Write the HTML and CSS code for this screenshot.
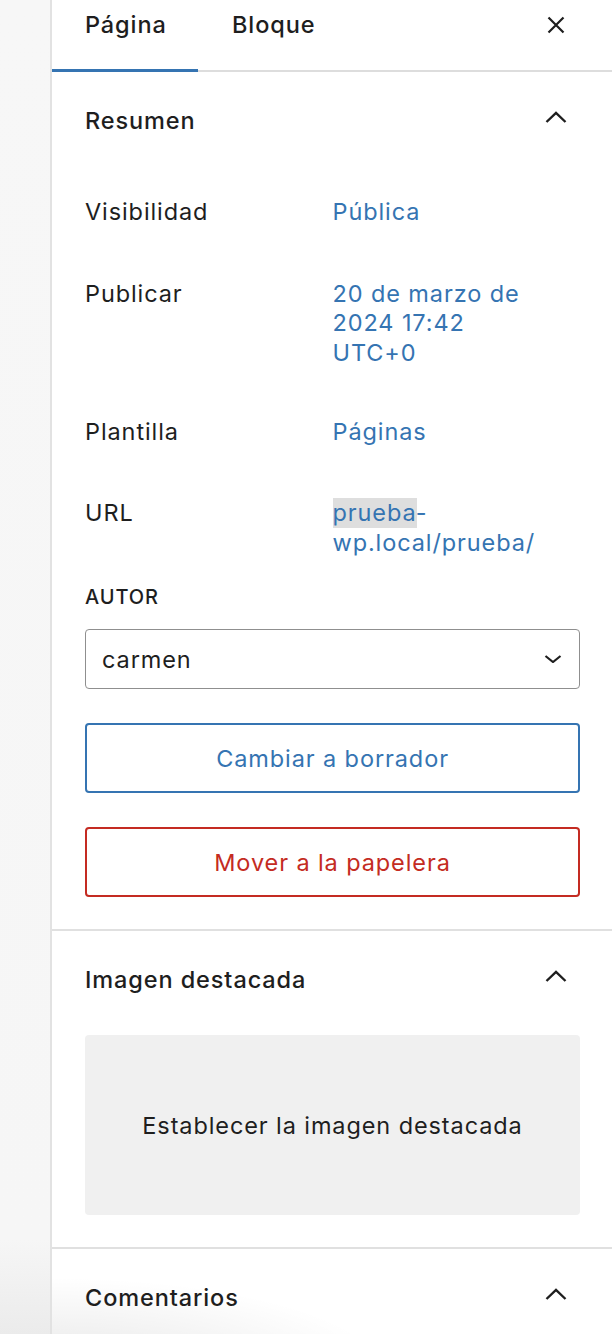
FILE: index.html
```html
<!DOCTYPE html>
<html lang="es">
<head>
<meta charset="utf-8">
<title>Página</title>
<link rel="stylesheet" href="styles.css">
</head>
<body>
<div class="layout">
  <div class="gutter"></div>
  <aside class="panel">
    <div class="tabs">
      <div class="tab tab--active">Página</div>
      <div class="tab">Bloque</div>
      <button class="icon-btn close" aria-label="Cerrar">
        <svg width="18" height="18" viewBox="0 0 18 18"><path d="M1.5 1.5 L16.5 16.5 M16.5 1.5 L1.5 16.5" stroke="#1e1e1e" stroke-width="2.2" fill="none"/></svg>
      </button>
    </div>

    <section class="section section--summary">
      <div class="section-header">
        <h2 class="section-title">Resumen</h2>
        <svg class="chevron" width="22" height="12" viewBox="0 0 22 12"><path d="M1.5 11 L11 2 L20.5 11" stroke="#1e1e1e" stroke-width="2.4" fill="none"/></svg>
      </div>
      <div class="rows">
        <div class="row">
          <span class="label">Visibilidad</span>
          <a class="value">Pública</a>
        </div>
        <div class="row">
          <span class="label">Publicar</span>
          <a class="value">20 de marzo de<br>2024 17:42<br>UTC+0</a>
        </div>
        <div class="row">
          <span class="label">Plantilla</span>
          <a class="value">Páginas</a>
        </div>
        <div class="row">
          <span class="label">URL</span>
          <a class="value"><span class="selected">prueba</span>-<br>wp.local/prueba/</a>
        </div>
      </div>
      <div class="author">
        <div class="field-label">AUTOR</div>
        <div class="select">
          <span>carmen</span>
          <svg width="18" height="8" viewBox="0 0 18 8"><path d="M1.5 1 L9 7 L16.5 1" stroke="#1e1e1e" stroke-width="2.2" fill="none"/></svg>
        </div>
      </div>
      <div class="btn btn--primary">Cambiar a borrador</div>
      <div class="btn btn--danger">Mover a la papelera</div>
    </section>

    <section class="section section--image">
      <div class="section-header">
        <h2 class="section-title">Imagen destacada</h2>
        <svg class="chevron" width="22" height="12" viewBox="0 0 22 12"><path d="M1.5 11 L11 2 L20.5 11" stroke="#1e1e1e" stroke-width="2.4" fill="none"/></svg>
      </div>
      <div class="image-drop">Establecer la imagen destacada</div>
    </section>

    <section class="section section--comments">
      <div class="section-header">
        <h2 class="section-title">Comentarios</h2>
        <svg class="chevron" width="22" height="12" viewBox="0 0 22 12"><path d="M1.5 11 L11 2 L20.5 11" stroke="#1e1e1e" stroke-width="2.4" fill="none"/></svg>
      </div>
    </section>
  </aside>
</div>
</body>
</html>
```

FILE: styles.css
```css
* { box-sizing: border-box; }

html, body {
  margin: 0;
  padding: 0;
  height: 100%;
  overflow: hidden;
}

body {
  font-family: Inter, "Noto Sans", "Liberation Sans", sans-serif;
  color: #1e1e1e;
  background: #fff;
  font-size: 23.5px;
  letter-spacing: 0.9px;
}

.layout {
  display: flex;
  min-height: 1334px;
}

.gutter {
  width: 52px;
  flex: 0 0 52px;
  background: linear-gradient(to bottom, #f7f7f7 0%, #f6f6f6 90%, #e6e6e6 100%);
  border-right: 2px solid #e2e2e2;
}

.panel {
  flex: 1;
  display: flex;
  flex-direction: column;
}

/* Tabs */
.tabs {
  height: 72px;
  display: flex;
  align-items: stretch;
  box-shadow: inset 0 -2px 0 #dddddd;
}

.tab {
  padding: 9px 0 0 33px;
  font-weight: 500;
  line-height: 32px;
  width: 146px;
}

.tab + .tab {
  width: auto;
  padding-left: 34px;
}

.tab--active {
  box-shadow: inset 0 -3px 0 #3574b2;
}

.icon-btn {
  margin-left: auto;
  margin-right: 47px;
  margin-top: 16px;
  align-self: flex-start;
  background: none;
  border: 0;
  padding: 0;
  width: 18px;
  height: 18px;
  display: flex;
}

/* Sections */
.section {
  padding: 0 32px 32px 33px;
  border-bottom: 2px solid #e0e0e0;
}

.section-header {
  height: 96px;
  display: flex;
  align-items: center;
  justify-content: space-between;
}

.section-title {
  margin: 0;
  font-size: 23.5px;
  font-weight: 500;
}

.chevron {
  margin-right: 13px;
  margin-top: -6px;
}

.rows {
  display: flex;
  flex-direction: column;
  gap: 48.5px;
  margin-top: 28px;
}

.row {
  display: grid;
  grid-template-columns: 1fr 1fr;
  min-height: 33px;
  padding-top: 1px;
  line-height: 29.5px;
}

.value {
  color: #3574b2;
}

.selected {
  display: inline-block;
  background: #dedede;
  line-height: 29.5px;
  letter-spacing: 0.9px;
  margin-right: -0.9px;
}

.author {
  margin-top: 28px;
}

.field-label {
  font-size: 20px;
  font-weight: 500;
  line-height: 24px;
  letter-spacing: 0.9px;
  margin-bottom: 20px;
}

.select {
  height: 60px;
  border: 1.5px solid #8f8f8f;
  border-radius: 4px;
  display: flex;
  align-items: center;
  justify-content: space-between;
  padding: 0 17px 0 16px;
}

.btn {
  height: 70px;
  margin-top: 34px;
  border-radius: 4px;
  display: flex;
  align-items: center;
  justify-content: center;
}

.btn--primary {
  border: 2px solid #3574b2;
  color: #3574b2;
}

.btn--danger {
  border: 2px solid #c42b22;
  color: #c42b22;
}

.image-drop {
  margin-top: 8px;
  height: 180px;
  background: #f0f0f0;
  border-radius: 4px;
  display: flex;
  align-items: center;
  justify-content: center;
}

.section--comments {
  flex: 1;
  border-bottom: 0;
  background: radial-gradient(ellipse 340px 100px at 0 100%, rgba(0,0,0,0.10), rgba(0,0,0,0) 100%);
}
```
